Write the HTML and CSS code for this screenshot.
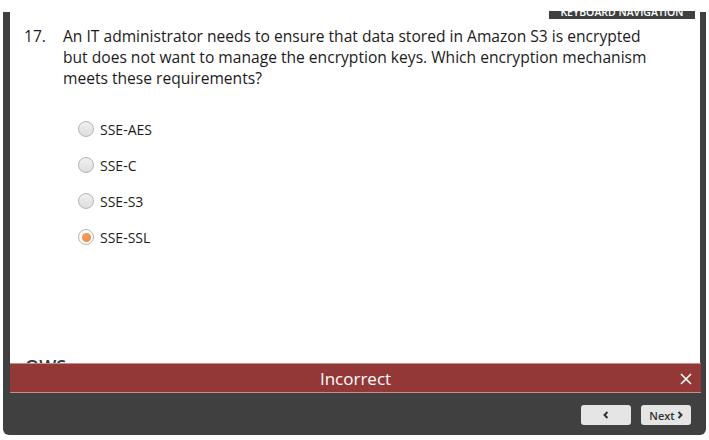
FILE: index.html
```html
<!DOCTYPE html>
<html>
<head>
<meta charset="utf-8">
<link rel="stylesheet" href="styles.css">
</head>
<body>
<div class="frame">
  <div class="kbd"><span>KEYBOARD NAVIGATION</span></div>
  <div class="content">
    <div class="question">
      <span class="qnum">17.</span>
      <p class="qtext">An IT administrator needs to ensure that data stored in Amazon S3 is encrypted but does not want to manage the encryption keys. Which encryption mechanism meets these requirements?</p>
    </div>
    <ul class="options">
      <li class="option"><span class="radio"></span><span class="label">SSE-AES</span></li>
      <li class="option"><span class="radio"></span><span class="label">SSE-C</span></li>
      <li class="option"><span class="radio"></span><span class="label">SSE-S3</span></li>
      <li class="option"><span class="radio selected"></span><span class="label">SSE-SSL</span></li>
    </ul>
    <div class="peek">OWS</div>
  </div>
  <div class="banner">
    <span class="banner-text">Incorrect</span>
    <svg class="close" width="12" height="12" viewBox="0 0 12 12"><path d="M1 1 L11 11 M11 1 L1 11" stroke="#ffffff" stroke-width="1.6" fill="none"/></svg>
  </div>
  <div class="footer">
    <button class="btn prev"><svg width="6" height="8" viewBox="0 0 6 8"><path d="M4.5 1 L1.5 4 L4.5 7" fill="none" stroke="#333" stroke-width="2"/></svg></button>
    <button class="btn next">Next <svg width="6" height="8" viewBox="0 0 6 8"><path d="M1.5 1 L4.5 4 L1.5 7" fill="none" stroke="#333" stroke-width="2"/></svg></button>
  </div>
</div>
</body>
</html>
```
FILE: styles.css
```css
html, body {
  margin: 0;
  padding: 0;
  background: #ffffff;
}
body {
  font-family: "Open Sans", "Noto Sans", sans-serif;
  padding-top: 12px;
}
.frame {
  position: relative;
  margin-left: 3px;
  width: 703px;
  height: 423px;
  background: #404040;
  border-radius: 0 0 6px 6px;
  box-sizing: border-box;
  padding: 0 6px 0 7px;
  display: flex;
  flex-direction: column;
}
.kbd {
  position: absolute;
  z-index: 3;
  top: -12px;
  left: 546px;
  width: 146px;
  height: 19px;
  background: #404040;
  color: #ffffff;
  font-size: 10.5px;
  font-weight: 600;
  line-height: 11px;
  text-align: center;
  clip-path: inset(11px 0 0 0);
  padding-top: 7px;
  box-sizing: border-box;
}
.content {
  position: relative;
  background: #ffffff;
  height: 351px;
  overflow: hidden;
  display: flex;
  flex-direction: column;
}
.question {
  display: flex;
  padding: 14px 0 0 14px;
  color: #1b1b1b;
  font-size: 15.6px;
  line-height: 21px;
}
.qnum {
  width: 39px;
  flex: none;
}
.qtext {
  margin: 0;
  width: 592px;
}
.options {
  list-style: none;
  margin: 22px 0 0 0;
  padding: 0 0 0 68px;
}
.option {
  display: flex;
  align-items: center;
  height: 36px;
  font-size: 14px;
  color: #1b1b1b;
}
.radio {
  width: 14px;
  height: 14px;
  border: 1px solid #b4b4b4;
  border-radius: 50%;
  background: linear-gradient(#f0f0f0, #dedede);
  margin-right: 6px;
  position: relative;
  flex: none;
}
.radio.selected {
  background: #ffffff;
}
.radio.selected::after {
  content: "";
  position: absolute;
  left: 2.5px;
  top: 2.5px;
  width: 9px;
  height: 9px;
  border-radius: 50%;
  background: radial-gradient(circle at 40% 40%, #f7a060, #ee7d3c);
}
.peek {
  margin-top: auto;
  margin-left: 15px;
  height: 6px;
  font-size: 18px;
  line-height: 18px;
  font-weight: 600;
  color: #2c3a4a;
}
.banner {
  height: 30px;
  background: #943737;
  border-top: 1px solid #c98a8a;
  border-bottom: 1px solid #c98a8a;
  box-sizing: border-box;
  margin-right: -1px;
  position: relative;
  display: flex;
  align-items: center;
  justify-content: center;
  color: #ffffff;
}
.banner-text {
  font-size: 17px;
}
.close {
  position: absolute;
  right: 9px;
  top: 9px;
}
.footer {
  flex: 1;
  display: flex;
  justify-content: flex-end;
  align-items: flex-start;
  padding: 12px 9px 0 0;
  gap: 10px;
}
.btn {
  width: 50px;
  height: 20px;
  border: none;
  border-radius: 3px;
  background: #e5e5e5;
  font-family: "Open Sans", sans-serif;
  font-size: 11px;
  font-weight: 600;
  color: #333;
  padding: 0;
  display: flex;
  align-items: center;
  justify-content: center;
  gap: 2px;
}
```
